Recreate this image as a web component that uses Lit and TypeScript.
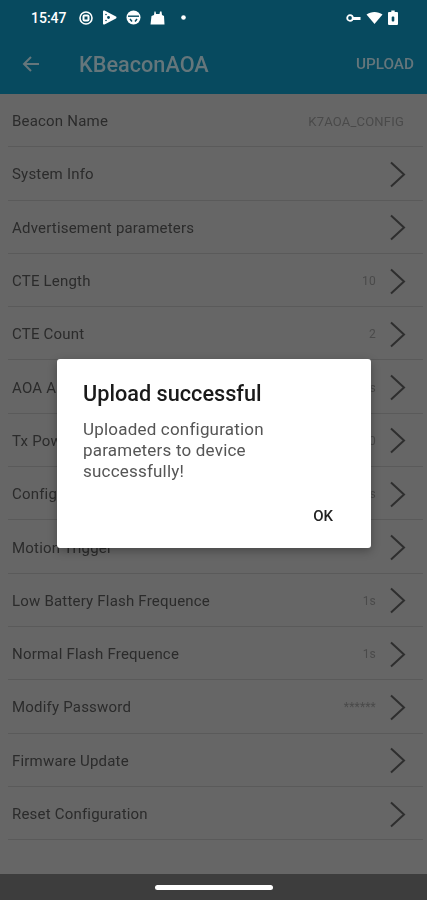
import { LitElement, html, css, svg } from "lit";
import { customElement } from "lit/decorators.js";

const rows: { label: string; value?: string; arrow: boolean }[] = [
  { label: "Beacon Name", value: "K7AOA_CONFIG", arrow: false },
  { label: "System Info", arrow: true },
  { label: "Advertisement parameters", arrow: true },
  { label: "CTE Length", value: "10", arrow: true },
  { label: "CTE Count", value: "2", arrow: true },
  { label: "AOA Algorithm", value: "1s", arrow: true },
  { label: "Tx Power", value: "0", arrow: true },
  { label: "Config Trigger", value: "1s", arrow: true },
  { label: "Motion Trigger", arrow: true },
  { label: "Low Battery Flash Frequence", value: "1s", arrow: true },
  { label: "Normal Flash Frequence", value: "1s", arrow: true },
  { label: "Modify Password", value: "******", arrow: true },
  { label: "Firmware Update", arrow: true },
  { label: "Reset Configuration", arrow: true },
];

const chevron = svg`<path d="M3 2.500 L16 14.500 L3 26.500" fill="none" stroke="#2e2e2e" stroke-width="2"/>`;

@customElement("app-root")
export class AppRoot extends LitElement {
  static styles = css`
    :host {
      display: block;
      width: 427px;
      height: 900px;
      overflow: hidden;
      background: #666666;
      font-family: Roboto, "Noto Sans", sans-serif;
    }
    .shot {
      position: relative;
      width: 427px;
      height: 900px;
      filter: blur(0.45px);
    }
    .page {
      height: 900px;
      display: flex;
      flex-direction: column;
    }
    .top {
      height: 94px;
      background: #074a5f;
      display: flex;
      flex-direction: column;
      flex: none;
    }
    .status {
      height: 35px;
      display: flex;
      align-items: center;
      padding: 0 29px 0 31px;
      color: #fff;
    }
    .time {
      font-size: 14px;
      font-weight: 500;
      width: 48px;
    }
    .notifs {
      display: flex;
      align-items: center;
      gap: 9px;
    }
    .dot {
      margin-left: 7px;
    }
    .spacer {
      flex: 1;
    }
    .sys {
      display: flex;
      align-items: center;
      gap: 5px;
    }
    .bar {
      flex: 1;
      display: flex;
      align-items: center;
      padding: 0 13px 1px 22px;
    }
    .back {
      width: 57px;
      display: flex;
    }
    .title {
      flex: 1;
      font-size: 21.700px;
      font-weight: 500;
      color: #65767b;
    }
    .upload {
      font-size: 15.300px;
      font-weight: 500;
      color: #65767b;
    }
    .list {
      flex: 1;
    }
    .row {
      height: 53.300px;
      box-sizing: border-box;
      margin-left: 8px;
      margin-right: 4px;
      border-bottom: 1px solid #5a5a5a;
      display: flex;
      align-items: center;
      padding-left: 4px;
      padding-top: 2px;
      font-size: 15px;
      letter-spacing: 0.2px;
      color: #2b2b2b;
    }
    .label {
      flex: 1;
    }
    .value {
      font-size: 12px;
      color: #4a4a4a;
    }
    .plain .value {
      font-size: 13px;
    }
    .row svg {
      flex: none;
      width: 19px;
      height: 29px;
      margin-left: 12px;
      margin-right: 16px;
    }
    .plain {
      padding-right: 19px;
    }
    .nav {
      height: 26px;
      flex: none;
      background: #3d3d3d;
      display: flex;
      align-items: center;
      justify-content: center;
    }
    .pill {
      width: 118px;
      height: 5px;
      border-radius: 3px;
      background: #fff;
    }
    .dialog {
      position: absolute;
      left: 57px;
      top: 359px;
      width: 314px;
      height: 189px;
      box-sizing: border-box;
      background: #fff;
      border-radius: 3px;
      box-shadow: 0 3px 10px rgba(0, 0, 0, 0.3);
      padding: 22px 26px 0;
      display: flex;
      flex-direction: column;
    }
    .dialog h2 {
      margin: 0;
      font-size: 21.700px;
      line-height: 26px;
      font-weight: 500;
      color: #1a1a1a;
    }
    .dialog p {
      margin: 12px 0 0;
      width: 205px;
      font-size: 17px;
      line-height: 21px;
      color: #555;
      letter-spacing: 0.2px;
    }
    .ok {
      align-self: flex-end;
      margin-top: 25px;
      margin-right: 12px;
      font-size: 15px;
      font-weight: 500;
      color: #222;
    }
  `;

  render() {
    return html`
      <div class="shot">
        <div class="page">
          <div class="top">
            <div class="status">
              <span class="time">15:47</span>
              <span class="notifs">
                <svg width="14" height="14" viewBox="0 0 14 14"><circle cx="7" cy="7" r="6" fill="none" stroke="#fff" stroke-width="1.600"/><rect x="3.500" y="3.500" width="7" height="7" rx="2" fill="#fff"/><rect x="5.500" y="5.500" width="3" height="3" fill="#074a5f"/></svg>
                <svg width="15" height="15" viewBox="0 0 15 15"><path d="M2 1.500 L13.500 7.500 L2 13.500 Z" fill="#fff" stroke="#fff" stroke-width="2" stroke-linejoin="round"/><circle cx="6.500" cy="7.500" r="1.400" fill="#074a5f"/><circle cx="4" cy="4.500" r="0.800" fill="#074a5f"/><circle cx="4" cy="10.500" r="0.800" fill="#074a5f"/></svg>
                <svg width="15" height="15" viewBox="0 0 15 15"><circle cx="7.500" cy="7.500" r="7" fill="#fff"/><path d="M2 6.200 H13" stroke="#074a5f" stroke-width="1.400"/><path d="M4 9 L6 11.500 M11 9 L9 11.500" stroke="#074a5f" stroke-width="1.500"/></svg>
                <svg width="15" height="14" viewBox="0 0 15 14"><path d="M0.500 13.500 L1.500 5 L4 4 L4.500 0.500 L5.500 0.500 L6 3 L9.500 3 L10 0.500 L11.500 0.500 L12 4 L14 5 L14.500 13.500 Z" fill="#fff"/></svg>
                <svg class="dot" width="5" height="5" viewBox="0 0 5 5"><circle cx="2.500" cy="2.500" r="2.300" fill="#fff"/></svg>
              </span>
              <span class="spacer"></span>
              <span class="sys">
                <svg width="15" height="8" viewBox="0 0 15 8"><circle cx="4" cy="4" r="2.800" fill="none" stroke="#fff" stroke-width="1.800"/><path d="M6.500 3 H14.500 V6 H7" fill="#fff"/></svg>
                <svg width="17" height="13" viewBox="0 0 17 13"><path d="M0.500 3.500 C5 0 12 0 16.500 3.500 L8.500 13 Z" fill="#fff"/></svg>
                <svg width="10" height="15" viewBox="0 0 10 15"><path d="M3.300 0.500 H6.700 V2 H9 Q10 2 10 3 V14 Q10 15 9 15 H1 Q0 15 0 14 V3 Q0 2 1 2 H3.300 Z" fill="#fff"/><rect x="3.700" y="6.500" width="2.600" height="5" rx="1" fill="#074a5f"/></svg>
              </span>
            </div>
            <div class="bar">
              <span class="back">
                <svg width="18" height="18" viewBox="0 0 18 18"><path d="M17 9 H2 M9 2 L2 9 L9 16" fill="none" stroke="#65767b" stroke-width="2"/></svg>
              </span>
              <span class="title">KBeaconAOA</span>
              <span class="upload">UPLOAD</span>
            </div>
          </div>
          <div class="list">
            ${rows.map(
              (r) => html`
                <div class="row ${r.arrow ? "" : "plain"}">
                  <span class="label">${r.label}</span>
                  ${r.value ? html`<span class="value">${r.value}</span>` : ""}
                  ${r.arrow ? html`<svg viewBox="0 0 19 29">${chevron}</svg>` : ""}
                </div>
              `
            )}
          </div>
          <div class="nav"><div class="pill"></div></div>
        </div>
        <div class="dialog">
          <h2>Upload successful</h2>
          <p>Uploaded configuration parameters to device successfully!</p>
          <span class="ok">OK</span>
        </div>
      </div>
    `;
  }
}
